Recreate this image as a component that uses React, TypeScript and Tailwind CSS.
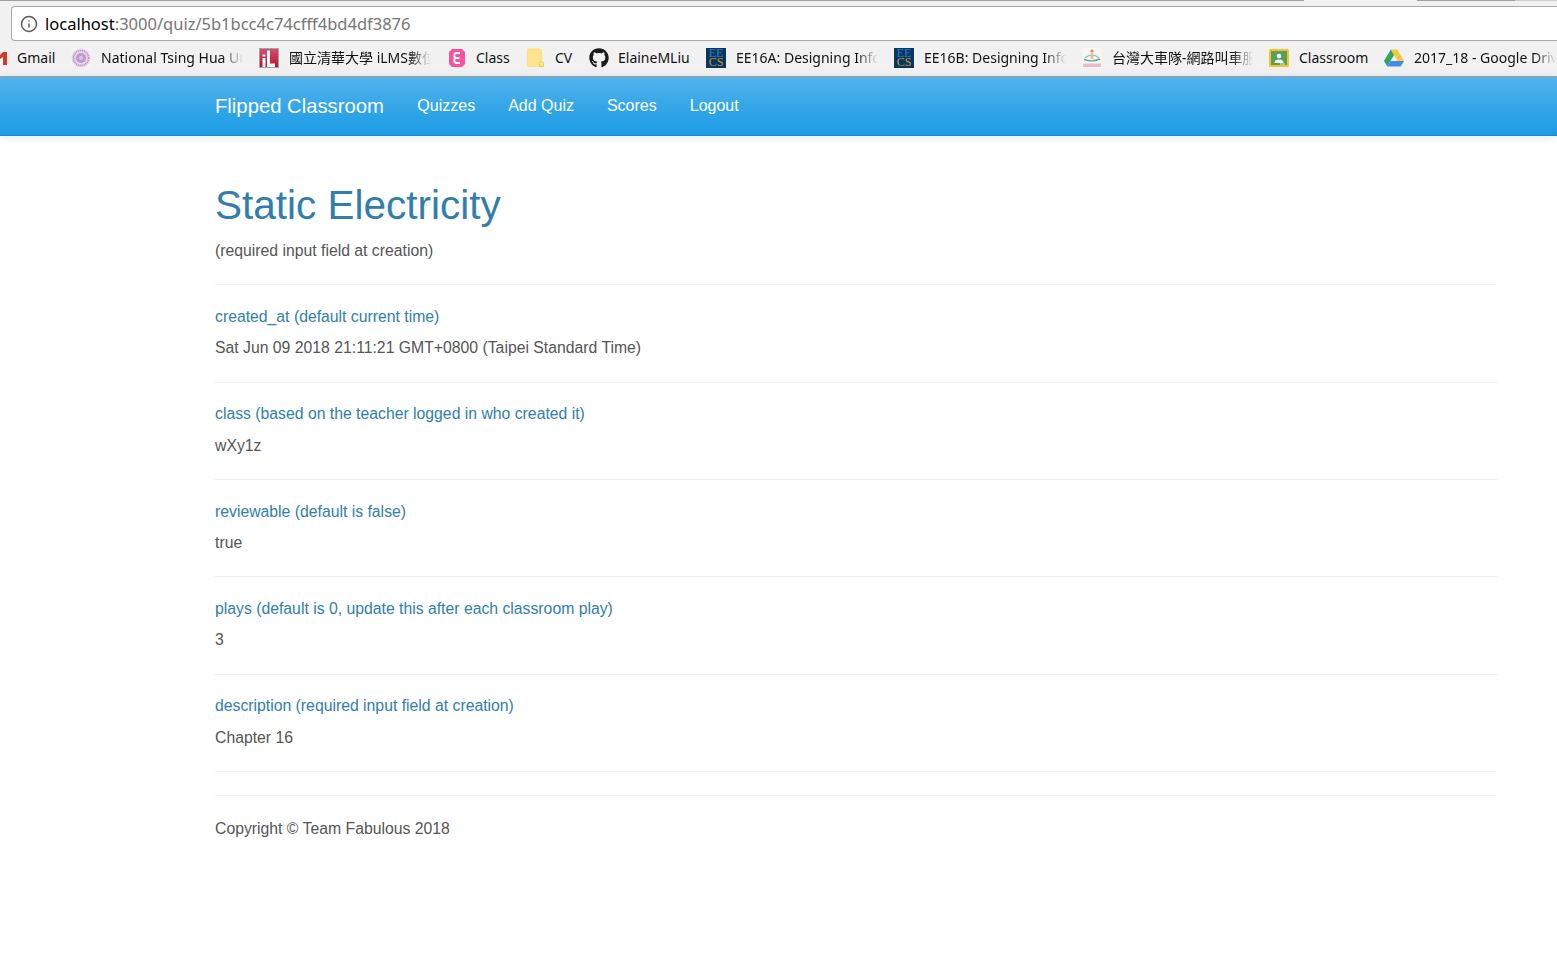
import { Info } from "lucide-react";
import { FaGithub } from "react-icons/fa";

const GmailEdge = () => (
  <svg width="7" height="20" viewBox="0 0 7 20">
    <path d="M0 7 L3 4 H7 V17 H3 V9 L0 11 Z" fill="#d0392b" />
  </svg>
);

const NthuIcon = () => (
  <svg width="20" height="20" viewBox="0 0 20 20">
    <rect width="20" height="20" fill="#f6f1f7" />
    <circle cx="10" cy="10" r="9.5" fill="#e6d5ea" />
    <circle cx="10" cy="10" r="7.5" fill="none" stroke="#b184bd" strokeWidth="1.6" strokeDasharray="1 1" />
    <circle cx="10" cy="10" r="5" fill="#c09bca" />
    <circle cx="10" cy="10" r="2" fill="#dcc6e2" />
  </svg>
);

const IlmsIcon = () => (
  <svg width="20" height="20" viewBox="0 0 20 20">
    <defs>
      <linearGradient id="ilms" x1="0" y1="0" x2="0" y2="1">
        <stop offset="0" stopColor="#d9506f" />
        <stop offset="1" stopColor="#b5102e" />
      </linearGradient>
    </defs>
    <rect x="0.5" y="0.5" width="19" height="19" fill="url(#ilms)" stroke="#a3a3a3" />
    <path d="M3.5 6.5 H6.5 V8.5 H3.5 Z M3.5 10 H6.5 V19 H3.5 Z M8 2.5 H11 V15.5 H16 V19 H8 Z" fill="#ffffff" />
  </svg>
);

const ClassIcon = () => (
  <svg width="20" height="20" viewBox="0 0 20 20">
    <path d="M5 1 H15 L18 4 V16 L15 19 H5 L2 16 V4 Z" fill="#fb4fa0" />
    <path d="M13 5 H9.5 Q7.2 5 7.2 7.5 T9.5 10 H12.5 H9.5 Q7.2 10 7.2 12.5 T9.5 15 H13" fill="none" stroke="#ffffff" strokeWidth="1.8" />
  </svg>
);

const FolderIcon = () => (
  <svg width="20" height="20" viewBox="0 0 20 20">
    <path d="M1.5 1 H13.5 Q15.5 1 15.5 3 V18.5 H3 Q1.5 18.5 1.5 17 Z" fill="#fde58f" stroke="#fbdc72" strokeWidth="0.8" />
    <path d="M13.5 18.5 V15.5 Q13.5 14 15 14 H16 Q17.5 14 17.5 15.5 V18.5 Z" fill="#fde58f" stroke="#f2cc5a" />
  </svg>
);

const EecsIcon = () => (
  <div className="flex h-5 w-5 flex-col items-center justify-center overflow-hidden bg-[#0b3561] font-['Liberation_Serif',serif] text-[12px] leading-[9.5px]">
    <span className="text-[#1d84c4]">EE</span>
    <span className="text-[#c99a2e]">CS</span>
  </div>
);

const TaxiIcon = () => (
  <svg width="20" height="20" viewBox="0 0 20 20">
    <rect width="20" height="20" fill="#f8f6f4" />
    <circle cx="10" cy="3" r="1.6" fill="#e08a5c" />
    <path d="M3 10 Q10 4 17 10" fill="none" stroke="#8fb7c4" strokeWidth="1.2" />
    <path d="M2 11.5 Q10 14.5 18 11" fill="none" stroke="#62a8a0" strokeWidth="1.4" />
    <rect x="8.5" y="5" width="3" height="6" fill="#e9c58f" />
    <rect x="1" y="15.5" width="18" height="3.5" fill="#eeb9c2" />
  </svg>
);

const ClassroomIcon = () => (
  <svg width="20" height="20" viewBox="0 0 20 20">
    <rect x="0" y="1" width="20" height="18" rx="1.5" fill="#fbc02d" />
    <rect x="2" y="3" width="16" height="14" fill="#57a05a" />
    <circle cx="10" cy="8" r="2.3" fill="#ffffff" />
    <path d="M5.5 15 Q5.5 11.5 10 11.5 T14.5 15 Z" fill="#ffffff" />
    <rect x="11" y="15.5" width="5" height="1" fill="#e8f0e8" />
  </svg>
);

const DriveIcon = () => (
  <svg width="20" height="20" viewBox="0 0 20 20">
    <path d="M6.8 1.5 H13.2 L20 13 H13.6 Z" fill="#fcc934" />
    <path d="M6.8 1.5 L0 13 L3.3 18.5 L10 7 Z" fill="#2fa866" />
    <path d="M6.6 13 H20 L16.7 18.5 H3.3 Z" fill="#4688f1" />
  </svg>
);

const bookmarks = [
  { icon: <GmailEdge />, label: "Gmail", boxClass: "w-[7px]", textClass: "w-[38px]" },
  { icon: <NthuIcon />, label: "National Tsing Hua University", boxClass: "w-5", textClass: "w-[142px] [mask-image:linear-gradient(to_right,black_85%,transparent)]" },
  { icon: <IlmsIcon />, label: "國立清華大學 iLMS數位學習平台", boxClass: "w-5", textClass: "w-[142px] [mask-image:linear-gradient(to_right,black_85%,transparent)]" },
  { icon: <ClassIcon />, label: "Class", boxClass: "w-5", textClass: "w-[34px] -ml-px" },
  { icon: <FolderIcon />, label: "CV", boxClass: "w-5", textClass: "w-[19px] -mr-px -ml-px" },
  { icon: <FaGithub className="h-5 w-5 text-[#1b1b1b]" />, label: "ElaineMLiu", boxClass: "w-5", textClass: "w-[73px] -mr-px -ml-px" },
  { icon: <EecsIcon />, label: "EE16A: Designing Information Devices", boxClass: "w-5", textClass: "w-[142px] [mask-image:linear-gradient(to_right,black_85%,transparent)]" },
  { icon: <EecsIcon />, label: "EE16B: Designing Information Devices", boxClass: "w-5", textClass: "w-[142px] [mask-image:linear-gradient(to_right,black_85%,transparent)]" },
  { icon: <TaxiIcon />, label: "台灣大車隊-網路叫車服務", boxClass: "w-5", textClass: "w-[141px] [mask-image:linear-gradient(to_right,black_85%,transparent)]" },
  { icon: <ClassroomIcon />, label: "Classroom", boxClass: "w-5", textClass: "w-[69px]" },
  { icon: <DriveIcon />, label: "2017_18 - Google Drive", boxClass: "w-5", textClass: "w-[142px] [mask-image:linear-gradient(to_right,black_85%,transparent)]" },
];

const fields = [
  { label: "created_at (default current time)", value: "Sat Jun 09 2018 21:11:21 GMT+0800 (Taipei Standard Time)" },
  { label: "class (based on the teacher logged in who created it)", value: "wXy1z" },
  { label: "reviewable (default is false)", value: "true" },
  { label: "plays (default is 0, update this after each classroom play)", value: "3" },
  { label: "description (required input field at creation)", value: "Chapter 16" },
];

const navLinks = ["Quizzes", "Add Quiz", "Scores", "Logout"];

const BrowserChrome = () => (
  <div className="bg-[#f1f1f1] font-['Noto_Sans','Noto_Sans_CJK_TC',sans-serif]">
    <div className="flex h-[6px] items-start">
      <div className="h-px w-[1304px] bg-[#a0a0a0]" />
      <div className="w-[113px]" />
      <div className="h-px w-[98px] bg-[#a0a0a0]" />
      <div className="h-px flex-1 bg-[#cfcfcf]" />
    </div>
    <div className="pl-[11px]">
      <div className="flex h-[35px] items-center gap-[7px] rounded-l-sm border border-r-0 border-[#a9a9a9] bg-white pl-[8px]">
        <Info size={18} strokeWidth={2} className="text-[#5a5a5a]" />
        <div className="pt-[2px] text-[16.5px]">
          <span className="text-black">localhost</span>
          <span className="text-[#767676]">:3000/quiz/5b1bcc4c74cfff4bd4df3876</span>
        </div>
      </div>
    </div>
    <div className="flex h-[36px] items-center gap-4 overflow-hidden border-b border-[#a5a5a5] pb-[1px]">
      {bookmarks.map((b, i) => (
        <div key={i} className="flex shrink-0 items-center gap-[10px]">
          <div className={b.boxClass}>{b.icon}</div>
          <div className={`overflow-hidden whitespace-nowrap pb-px text-[14px] leading-5 text-[#111111] ${b.textClass}`}>{b.label}</div>
        </div>
      ))}
    </div>
  </div>
);

const Navbar = () => (
  <nav className="flex h-[59px] items-center border-b border-[#178acc] bg-[linear-gradient(#54b4eb,#2fa4e7_60%,#1d9ce5)] pl-[215px] text-white shadow-[0_1px_10px_rgba(0,0,0,0.1)] [text-shadow:0_1px_0_rgba(0,0,0,0.05)]">
    <a className="pr-[17px] text-[20.25px]">Flipped Classroom</a>
    {navLinks.map((l) => (
      <a key={l} className="px-[16.5px] text-base">
        {l}
      </a>
    ))}
  </nav>
);

export default function App() {
  return (
    <div className="min-h-screen bg-white font-['Liberation_Sans',Arial,sans-serif] text-[15.77px] text-[#555555]">
      <BrowserChrome />
      <Navbar />
      <main className="pl-[215px] pr-[60px] pt-[46px] leading-[22.857px]">
        <h1 className="text-[40.5px] leading-[46px] text-[#317eac]">Static Electricity</h1>
        <p className="mb-[21.75px] mt-[11.6px]">(required input field at creation)</p>
        {fields.map((f) => (
          <section key={f.label} className="h-[97.4px] border-t border-[#eeeeee] pt-[20.6px]">
            <h5 className="text-[#317eac]">{f.label}</h5>
            <p className="mt-[8.5px]">{f.value}</p>
          </section>
        ))}
        <div className="mb-[23px] border-t border-[#eeeeee]" />
        <footer className="border-t border-[#eeeeee] pt-[22px]">Copyright © Team Fabulous 2018</footer>
      </main>
    </div>
  );
}
